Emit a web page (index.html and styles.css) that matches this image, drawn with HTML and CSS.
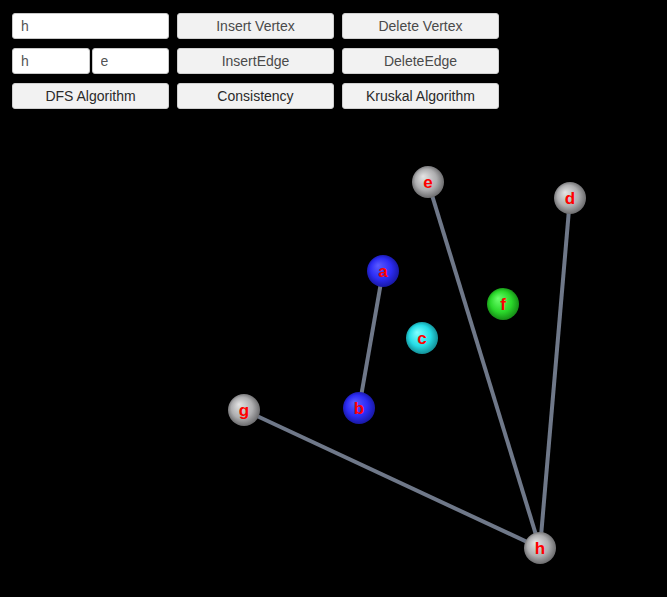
FILE: index.html
```html
<!DOCTYPE html>
<html lang="en">
<head>
    <meta charset="UTF-8">
    <title>Graph Editor</title>
    <link rel="stylesheet" href="styles.css">
</head>
<body>
    <div class="controls">
        <input class="field" type="text" value="h">
        <button class="btn">Insert Vertex</button>
        <button class="btn">Delete Vertex</button>

        <div class="pair">
            <input class="field" type="text" value="h">
            <input class="field" type="text" value="e">
        </div>
        <button class="btn">InsertEdge</button>
        <button class="btn">DeleteEdge</button>

        <button class="btn dark">DFS Algorithm</button>
        <button class="btn dark">Consistency</button>
        <button class="btn dark">Kruskal Algorithm</button>
    </div>

    <svg class="scene" width="667" height="597" viewBox="0 0 667 597">
        <defs>
            <radialGradient id="grey" cx="0.5" cy="0.5" r="0.55" fx="0.34" fy="0.32">
                <stop offset="0" stop-color="#e4e4e4"/>
                <stop offset="0.6" stop-color="#aeaeb0"/>
                <stop offset="1" stop-color="#5e5e60"/>
            </radialGradient>
            <radialGradient id="blue" cx="0.5" cy="0.5" r="0.55" fx="0.34" fy="0.32">
                <stop offset="0" stop-color="#5a5aff"/>
                <stop offset="0.6" stop-color="#2c2cf4"/>
                <stop offset="1" stop-color="#141494"/>
            </radialGradient>
            <radialGradient id="green" cx="0.5" cy="0.5" r="0.55" fx="0.34" fy="0.32">
                <stop offset="0" stop-color="#6cff6c"/>
                <stop offset="0.6" stop-color="#2ad82a"/>
                <stop offset="1" stop-color="#127e12"/>
            </radialGradient>
            <radialGradient id="cyan" cx="0.5" cy="0.5" r="0.55" fx="0.34" fy="0.32">
                <stop offset="0" stop-color="#80ffff"/>
                <stop offset="0.6" stop-color="#26dde6"/>
                <stop offset="1" stop-color="#108088"/>
            </radialGradient>
        </defs>

        <g class="edges">
            <line x1="383" y1="271" x2="359" y2="408"/>
            <line x1="428" y1="182" x2="540" y2="548"/>
            <line x1="570" y1="198" x2="540" y2="548"/>
            <line x1="244" y1="410" x2="540" y2="548"/>
        </g>

        <g class="nodes">
            <circle cx="428" cy="182" r="16" fill="url(#grey)"/>
            <text x="428" y="188">e</text>
            <circle cx="570" cy="198" r="16" fill="url(#grey)"/>
            <text x="570" y="204">d</text>
            <circle cx="383" cy="271" r="16" fill="url(#blue)"/>
            <text x="383" y="277">a</text>
            <circle cx="503" cy="304" r="16" fill="url(#green)"/>
            <text x="503" y="310">f</text>
            <circle cx="422" cy="338" r="16" fill="url(#cyan)"/>
            <text x="422" y="344">c</text>
            <circle cx="359" cy="408" r="16" fill="url(#blue)"/>
            <text x="359" y="414">b</text>
            <circle cx="244" cy="410" r="16" fill="url(#grey)"/>
            <text x="244" y="416">g</text>
            <circle cx="540" cy="548" r="16" fill="url(#grey)"/>
            <text x="540" y="554">h</text>
        </g>
    </svg>
</body>
</html>
```

FILE: styles.css
```css
body {
    margin: 0;
    width: 667px;
    height: 597px;
    background-color: #000;
    font-family: 'Liberation Sans', Arial, sans-serif;
    position: relative;
    overflow: hidden;
}

.controls {
    display: grid;
    grid-template-columns: 157px 157px 157px;
    grid-auto-rows: 26px;
    column-gap: 8px;
    row-gap: 9px;
    padding: 13px 0 0 12px;
    position: relative;
    z-index: 1;
}

.pair {
    display: flex;
    gap: 2px;
}

.pair .field {
    width: 50%;
}

.field {
    box-sizing: border-box;
    height: 26px;
    width: 100%;
    margin: 0;
    padding: 0 8px;
    border: 1px solid #c8c8c8;
    border-radius: 3px;
    background-color: #fff;
    color: #555;
    font-family: inherit;
    font-size: 14px;
    outline: none;
}

.btn {
    box-sizing: border-box;
    height: 26px;
    margin: 0;
    padding: 0;
    border: 1px solid #cfcfcf;
    border-radius: 3px;
    background-color: #f2f2f2;
    color: #4a4a4a;
    font-family: inherit;
    font-size: 14px;
    cursor: pointer;
}

.btn.dark {
    color: #2a2a2a;
}

.scene {
    position: absolute;
    left: 0;
    top: 0;
}

.edges line {
    stroke: #6f7889;
    stroke-width: 4;
}

.nodes text {
    fill: #ff0000;
    font-family: 'Liberation Sans', Arial, sans-serif;
    font-size: 17px;
    font-weight: bold;
    text-anchor: middle;
}
```
